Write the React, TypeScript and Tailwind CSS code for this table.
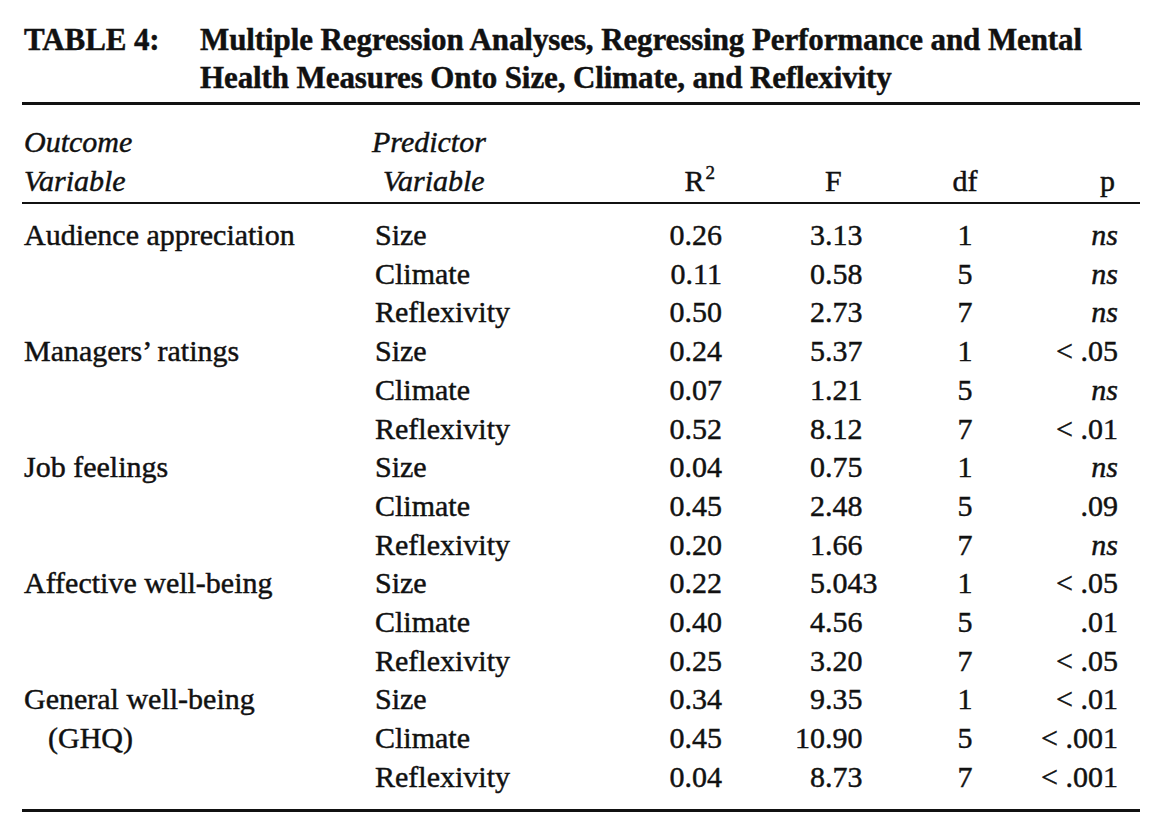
import React from "react";

type Row = {
  outcome?: string;
  predictor: string;
  r2: string;
  f: string;
  df: string;
  p: string;
};

const rows: Row[] = [
  { outcome: "Audience appreciation", predictor: "Size", r2: "0.26", f: "3.13", df: "1", p: "ns" },
  { predictor: "Climate", r2: "0.11", f: "0.58", df: "5", p: "ns" },
  { predictor: "Reflexivity", r2: "0.50", f: "2.73", df: "7", p: "ns" },
  { outcome: "Managers\u2019 ratings", predictor: "Size", r2: "0.24", f: "5.37", df: "1", p: "< .05" },
  { predictor: "Climate", r2: "0.07", f: "1.21", df: "5", p: "ns" },
  { predictor: "Reflexivity", r2: "0.52", f: "8.12", df: "7", p: "< .01" },
  { outcome: "Job feelings", predictor: "Size", r2: "0.04", f: "0.75", df: "1", p: "ns" },
  { predictor: "Climate", r2: "0.45", f: "2.48", df: "5", p: ".09" },
  { predictor: "Reflexivity", r2: "0.20", f: "1.66", df: "7", p: "ns" },
  { outcome: "Affective well-being", predictor: "Size", r2: "0.22", f: "5.043", df: "1", p: "< .05" },
  { predictor: "Climate", r2: "0.40", f: "4.56", df: "5", p: ".01" },
  { predictor: "Reflexivity", r2: "0.25", f: "3.20", df: "7", p: "< .05" },
  { outcome: "General well-being", predictor: "Size", r2: "0.34", f: "9.35", df: "1", p: "< .01" },
  { outcome: "(GHQ)", predictor: "Climate", r2: "0.45", f: "10.90", df: "5", p: "< .001" },
  { predictor: "Reflexivity", r2: "0.04", f: "8.73", df: "7", p: "< .001" },
];

function Decimal({ value }: { value: string }) {
  const [whole, frac] = value.split(".");
  return (
    <div className="flex w-[178px] shrink-0 whitespace-nowrap">
      <span className="w-[103px] text-right">{whole}</span>
      <span>.{frac}</span>
    </div>
  );
}

export default function App() {
  return (
    <div
      className="min-h-screen w-[1158px] bg-white text-[#111] [-webkit-text-stroke:0.45px_#111]"
      style={{ fontFamily: '"Liberation Serif", "Times New Roman", serif' }}
    >
      <div className="ml-[22px] w-[1118px] pt-[21px]">
        {/* caption */}
        <div className="flex whitespace-nowrap text-[31px] font-bold leading-[38px] tracking-[-0.1px]">
          <div className="w-[178px] shrink-0 pl-[2px]">TABLE 4:</div>
          <div>
            <div>Multiple Regression Analyses, Regressing Performance and Mental</div>
            <div>Health Measures Onto Size, Climate, and Reflexivity</div>
          </div>
        </div>

        <div className="mt-[5px] h-[3px] bg-[#111]" />

        {/* column heads */}
        <div className="mt-[17px] flex whitespace-nowrap text-[30px] leading-[39px]">
          <div className="w-[353px] shrink-0 pl-[2px] italic">
            <div>Outcome</div>
            <div>Variable</div>
          </div>
          <div className="w-[265px] shrink-0 italic">
            <div className="-ml-[3px]">Predictor</div>
            <div className="ml-[8px]">Variable</div>
          </div>
          <div className="flex w-[82px] shrink-0 flex-col justify-end pr-[7px] text-right">
            <div>
              R
              <span className="relative -top-[12px] ml-[1px] align-baseline text-[19px] leading-none">2</span>
            </div>
          </div>
          <div className="flex w-[178px] shrink-0 flex-col justify-end pl-[103px]">
            <div>F</div>
          </div>
          <div className="flex w-[130px] shrink-0 flex-col justify-end text-center">
            <div>df</div>
          </div>
          <div className="flex w-[88px] shrink-0 flex-col justify-end pr-[3px] text-right">
            <div>p</div>
          </div>
        </div>

        <div className="mt-[2px] h-[2px] bg-[#111]" />

        {/* body */}
        <div className="mt-[12px] whitespace-nowrap text-[30px] leading-[38.7px]">
          {rows.map((r, i) => (
            <div key={i} className="flex">
              <div
                className={
                  r.outcome === "(GHQ)"
                    ? "w-[353px] shrink-0 pl-[26px]"
                    : "w-[353px] shrink-0 pl-[2px]"
                }
              >
                {r.outcome ?? ""}
              </div>
              <div className="w-[265px] shrink-0">{r.predictor}</div>
              <div className="w-[82px] shrink-0 text-right">{r.r2}</div>
              <Decimal value={r.f} />
              <div className="w-[130px] shrink-0 text-center">{r.df}</div>
              <div className={r.p === "ns" ? "w-[88px] shrink-0 text-right italic" : "w-[88px] shrink-0 text-right"}>
                {r.p}
              </div>
            </div>
          ))}
        </div>

        <div className="mt-[12px] h-[3px] bg-[#111]" />
      </div>
    </div>
  );
}
